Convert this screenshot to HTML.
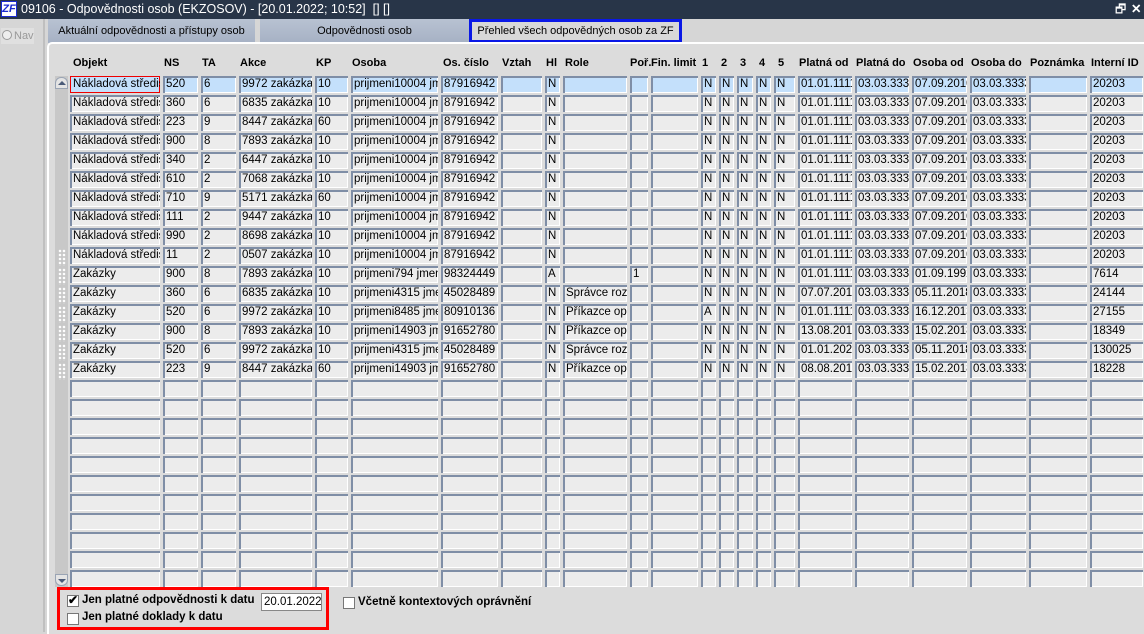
<!DOCTYPE html>
<html><head><meta charset="utf-8"><style>
*{margin:0;padding:0;box-sizing:border-box}
body{width:1144px;height:632px;overflow:hidden;background:#d6d6d6;font-family:"Liberation Sans",Arial,sans-serif;font-size:12px;color:#000;position:relative}
.abs{position:absolute}
#title{left:0;top:0;width:1144px;height:19px;background:#283548;color:#fff;font-size:12.5px;line-height:19px}
#logo{left:1px;top:1px;width:16px;height:16px;background:#fff;color:#1a2bd0;font-weight:bold;font-style:italic;font-size:11px;line-height:14px;text-align:center;border:1px solid #1a2bd0}
#side{left:0;top:19px;width:45px;height:613px;background:#d6d6d6;border-right:2px solid #bfbfbf}
#tabs{left:47px;top:19px;width:1097px;height:24px;background:#d6d6d6}
.tab{position:absolute;top:19px;height:24px;background:linear-gradient(#b8c2d2,#a6b1c4);font-size:11px;line-height:24px;text-align:center;color:#000;white-space:nowrap;overflow:hidden}
#panel{left:47px;top:42px;width:1100px;height:592px;background:#dcdcdc;border-top:2px solid #fff;border-left:2px solid #fff;border-top-left-radius:5px}
table{position:absolute;left:70px;top:76px;width:1076px;border-collapse:separate;border-spacing:0;table-layout:fixed}
td{height:19px;border-right:3px solid transparent;border-bottom:2px solid transparent;background:#ececec;background-clip:padding-box;box-shadow:inset 2px 2px 0 #7f8ea6,inset -1px -1px 0 #fff;padding:0 0 0 3px;white-space:nowrap;overflow:hidden;font-size:11.5px;line-height:17px}
tr.sel td{background-color:#c4e0fb}
.hd{position:absolute;top:57px;font-weight:bold;font-size:11px}
#scroll{left:55px;top:76px;width:13px;height:511px;background:#c8c8c8}
.btn{position:absolute;left:55px;width:13px;height:12px;background:#e4e4e4;border:1px solid #9aa4b4;border-radius:6px 6px 0 0}
.dots{position:absolute;left:58px;width:8px;height:17px;background:radial-gradient(circle,#fff 1px,transparent 1.5px) 0 0/4px 4px}
.cb{position:absolute;width:12px;height:12px;background:#fff;border:1px solid #777}
.lb{position:absolute;font-weight:bold;font-size:11.5px}
</style></head><body>
<div id="title" class="abs"><div id="logo" class="abs">ZF</div><span class="abs" style="left:21px;top:0">09106 - Odpovědnosti osob (EKZOSOV) - [20.01.2022; 10:52]&nbsp; [] []</span><span class="abs" style="left:1115px;top:0;font-size:12px">🗗</span><span class="abs" style="left:1131px;top:0;font-weight:bold">✕</span></div>
<div id="side" class="abs"><div class="abs" style="left:1px;top:9px;width:33px;height:16px;background:#e0e0e0;color:#999;font-size:11px;line-height:16px;white-space:nowrap"><span style="display:inline-block;width:10px;height:10px;border:1px solid #999;border-radius:50%;vertical-align:-1px;margin:0 2px 0 1px;background:#eee"></span>Nav</div></div>
<div id="tabs" class="abs"></div>
<div class="tab" style="left:48px;width:207px">Aktuální odpovědnosti a přístupy osob</div>
<div class="tab" style="left:260px;width:209px">Odpovědnosti osob</div>
<div class="tab" style="left:469px;width:213px;background:#d8d8d8;border:3px solid #0a18e6;line-height:18px">Přehled všech odpovědných osob za ZF</div>
<div id="panel" class="abs"></div>
<div class="hd" style="left:73px">Objekt</div><div class="hd" style="left:164px">NS</div><div class="hd" style="left:202px">TA</div><div class="hd" style="left:240px">Akce</div><div class="hd" style="left:316px">KP</div><div class="hd" style="left:352px">Osoba</div><div class="hd" style="left:443px">Os. číslo</div><div class="hd" style="left:502px">Vztah</div><div class="hd" style="left:546px">Hl</div><div class="hd" style="left:565px">Role</div><div class="hd" style="left:630px">Poř.</div><div class="hd" style="left:651px">Fin. limit</div><div class="hd" style="left:702px">1</div><div class="hd" style="left:721px">2</div><div class="hd" style="left:740px">3</div><div class="hd" style="left:759px">4</div><div class="hd" style="left:778px">5</div><div class="hd" style="left:799px">Platná od</div><div class="hd" style="left:856px">Platná do</div><div class="hd" style="left:913px">Osoba od</div><div class="hd" style="left:971px">Osoba do</div><div class="hd" style="left:1030px">Poznámka</div><div class="hd" style="left:1091px">Interní ID</div>
<div id="scroll" class="abs"></div>
<div class="btn" style="top:77px"><div style="margin:3px auto 0;width:0;height:0;border:4px solid transparent;border-bottom:4px solid #4a5a78;border-top:0"></div></div>
<div class="btn" style="top:574px;border-radius:0 0 6px 6px"><div style="margin:4px auto 0;width:0;height:0;border:4px solid transparent;border-top:4px solid #4a5a78;border-bottom:0"></div></div>
<div class="dots" style="top:249px"></div><div class="dots" style="top:268px"></div><div class="dots" style="top:287px"></div><div class="dots" style="top:306px"></div><div class="dots" style="top:325px"></div><div class="dots" style="top:344px"></div><div class="dots" style="top:363px"></div>
<table>
<colgroup><col style="width:93px"><col style="width:38px"><col style="width:38px"><col style="width:76px"><col style="width:36px"><col style="width:90px"><col style="width:60px"><col style="width:44px"><col style="width:18px"><col style="width:67px"><col style="width:21px"><col style="width:50px"><col style="width:18px"><col style="width:18px"><col style="width:19px"><col style="width:18px"><col style="width:24px"><col style="width:57px"><col style="width:57px"><col style="width:58px"><col style="width:59px"><col style="width:61px"><col style="width:56px"></colgroup>
<tr class="sel"><td style="box-shadow:inset 0 0 0 1px #e00">Nákladová středisko</td><td>520</td><td>6</td><td>9972 zakázka</td><td>10</td><td>prijmeni10004 jmeno</td><td>87916942</td><td></td><td>N</td><td></td><td></td><td></td><td>N</td><td>N</td><td>N</td><td>N</td><td>N</td><td>01.01.1111</td><td>03.03.3333</td><td>07.09.2010</td><td>03.03.3333</td><td></td><td>20203</td></tr>
<tr><td>Nákladová středisko</td><td>360</td><td>6</td><td>6835 zakázka</td><td>10</td><td>prijmeni10004 jmeno</td><td>87916942</td><td></td><td>N</td><td></td><td></td><td></td><td>N</td><td>N</td><td>N</td><td>N</td><td>N</td><td>01.01.1111</td><td>03.03.3333</td><td>07.09.2010</td><td>03.03.3333</td><td></td><td>20203</td></tr>
<tr><td>Nákladová středisko</td><td>223</td><td>9</td><td>8447 zakázka</td><td>60</td><td>prijmeni10004 jmeno</td><td>87916942</td><td></td><td>N</td><td></td><td></td><td></td><td>N</td><td>N</td><td>N</td><td>N</td><td>N</td><td>01.01.1111</td><td>03.03.3333</td><td>07.09.2010</td><td>03.03.3333</td><td></td><td>20203</td></tr>
<tr><td>Nákladová středisko</td><td>900</td><td>8</td><td>7893 zakázka</td><td>10</td><td>prijmeni10004 jmeno</td><td>87916942</td><td></td><td>N</td><td></td><td></td><td></td><td>N</td><td>N</td><td>N</td><td>N</td><td>N</td><td>01.01.1111</td><td>03.03.3333</td><td>07.09.2010</td><td>03.03.3333</td><td></td><td>20203</td></tr>
<tr><td>Nákladová středisko</td><td>340</td><td>2</td><td>6447 zakázka</td><td>10</td><td>prijmeni10004 jmeno</td><td>87916942</td><td></td><td>N</td><td></td><td></td><td></td><td>N</td><td>N</td><td>N</td><td>N</td><td>N</td><td>01.01.1111</td><td>03.03.3333</td><td>07.09.2010</td><td>03.03.3333</td><td></td><td>20203</td></tr>
<tr><td>Nákladová středisko</td><td>610</td><td>2</td><td>7068 zakázka</td><td>10</td><td>prijmeni10004 jmeno</td><td>87916942</td><td></td><td>N</td><td></td><td></td><td></td><td>N</td><td>N</td><td>N</td><td>N</td><td>N</td><td>01.01.1111</td><td>03.03.3333</td><td>07.09.2010</td><td>03.03.3333</td><td></td><td>20203</td></tr>
<tr><td>Nákladová středisko</td><td>710</td><td>9</td><td>5171 zakázka</td><td>60</td><td>prijmeni10004 jmeno</td><td>87916942</td><td></td><td>N</td><td></td><td></td><td></td><td>N</td><td>N</td><td>N</td><td>N</td><td>N</td><td>01.01.1111</td><td>03.03.3333</td><td>07.09.2010</td><td>03.03.3333</td><td></td><td>20203</td></tr>
<tr><td>Nákladová středisko</td><td>111</td><td>2</td><td>9447 zakázka</td><td>10</td><td>prijmeni10004 jmeno</td><td>87916942</td><td></td><td>N</td><td></td><td></td><td></td><td>N</td><td>N</td><td>N</td><td>N</td><td>N</td><td>01.01.1111</td><td>03.03.3333</td><td>07.09.2010</td><td>03.03.3333</td><td></td><td>20203</td></tr>
<tr><td>Nákladová středisko</td><td>990</td><td>2</td><td>8698 zakázka</td><td>10</td><td>prijmeni10004 jmeno</td><td>87916942</td><td></td><td>N</td><td></td><td></td><td></td><td>N</td><td>N</td><td>N</td><td>N</td><td>N</td><td>01.01.1111</td><td>03.03.3333</td><td>07.09.2010</td><td>03.03.3333</td><td></td><td>20203</td></tr>
<tr><td>Nákladová středisko</td><td>11</td><td>2</td><td>0507 zakázka</td><td>10</td><td>prijmeni10004 jmeno</td><td>87916942</td><td></td><td>N</td><td></td><td></td><td></td><td>N</td><td>N</td><td>N</td><td>N</td><td>N</td><td>01.01.1111</td><td>03.03.3333</td><td>07.09.2010</td><td>03.03.3333</td><td></td><td>20203</td></tr>
<tr><td>Zakázky</td><td>900</td><td>8</td><td>7893 zakázka</td><td>10</td><td>prijmeni794 jmeno</td><td>98324449</td><td></td><td>A</td><td></td><td>1</td><td></td><td>N</td><td>N</td><td>N</td><td>N</td><td>N</td><td>01.01.1111</td><td>03.03.3333</td><td>01.09.1992</td><td>03.03.3333</td><td></td><td>7614</td></tr>
<tr><td>Zakázky</td><td>360</td><td>6</td><td>6835 zakázka</td><td>10</td><td>prijmeni4315 jmeno</td><td>45028489</td><td></td><td>N</td><td>Správce rozpočtu</td><td></td><td></td><td>N</td><td>N</td><td>N</td><td>N</td><td>N</td><td>07.07.2019</td><td>03.03.3333</td><td>05.11.2018</td><td>03.03.3333</td><td></td><td>24144</td></tr>
<tr><td>Zakázky</td><td>520</td><td>6</td><td>9972 zakázka</td><td>10</td><td>prijmeni8485 jmeno</td><td>80910136</td><td></td><td>N</td><td>Příkazce operace</td><td></td><td></td><td>A</td><td>N</td><td>N</td><td>N</td><td>N</td><td>01.01.1111</td><td>03.03.3333</td><td>16.12.2013</td><td>03.03.3333</td><td></td><td>27155</td></tr>
<tr><td>Zakázky</td><td>900</td><td>8</td><td>7893 zakázka</td><td>10</td><td>prijmeni14903 jmeno</td><td>91652780</td><td></td><td>N</td><td>Příkazce operace</td><td></td><td></td><td>N</td><td>N</td><td>N</td><td>N</td><td>N</td><td>13.08.2018</td><td>03.03.3333</td><td>15.02.2018</td><td>03.03.3333</td><td></td><td>18349</td></tr>
<tr><td>Zakázky</td><td>520</td><td>6</td><td>9972 zakázka</td><td>10</td><td>prijmeni4315 jmeno</td><td>45028489</td><td></td><td>N</td><td>Správce rozpočtu</td><td></td><td></td><td>N</td><td>N</td><td>N</td><td>N</td><td>N</td><td>01.01.2021</td><td>03.03.3333</td><td>05.11.2018</td><td>03.03.3333</td><td></td><td>130025</td></tr>
<tr><td>Zakázky</td><td>223</td><td>9</td><td>8447 zakázka</td><td>60</td><td>prijmeni14903 jmeno</td><td>91652780</td><td></td><td>N</td><td>Příkazce operace</td><td></td><td></td><td>N</td><td>N</td><td>N</td><td>N</td><td>N</td><td>08.08.2018</td><td>03.03.3333</td><td>15.02.2018</td><td>03.03.3333</td><td></td><td>18228</td></tr>
<tr><td></td><td></td><td></td><td></td><td></td><td></td><td></td><td></td><td></td><td></td><td></td><td></td><td></td><td></td><td></td><td></td><td></td><td></td><td></td><td></td><td></td><td></td><td></td></tr>
<tr><td></td><td></td><td></td><td></td><td></td><td></td><td></td><td></td><td></td><td></td><td></td><td></td><td></td><td></td><td></td><td></td><td></td><td></td><td></td><td></td><td></td><td></td><td></td></tr>
<tr><td></td><td></td><td></td><td></td><td></td><td></td><td></td><td></td><td></td><td></td><td></td><td></td><td></td><td></td><td></td><td></td><td></td><td></td><td></td><td></td><td></td><td></td><td></td></tr>
<tr><td></td><td></td><td></td><td></td><td></td><td></td><td></td><td></td><td></td><td></td><td></td><td></td><td></td><td></td><td></td><td></td><td></td><td></td><td></td><td></td><td></td><td></td><td></td></tr>
<tr><td></td><td></td><td></td><td></td><td></td><td></td><td></td><td></td><td></td><td></td><td></td><td></td><td></td><td></td><td></td><td></td><td></td><td></td><td></td><td></td><td></td><td></td><td></td></tr>
<tr><td></td><td></td><td></td><td></td><td></td><td></td><td></td><td></td><td></td><td></td><td></td><td></td><td></td><td></td><td></td><td></td><td></td><td></td><td></td><td></td><td></td><td></td><td></td></tr>
<tr><td></td><td></td><td></td><td></td><td></td><td></td><td></td><td></td><td></td><td></td><td></td><td></td><td></td><td></td><td></td><td></td><td></td><td></td><td></td><td></td><td></td><td></td><td></td></tr>
<tr><td></td><td></td><td></td><td></td><td></td><td></td><td></td><td></td><td></td><td></td><td></td><td></td><td></td><td></td><td></td><td></td><td></td><td></td><td></td><td></td><td></td><td></td><td></td></tr>
<tr><td></td><td></td><td></td><td></td><td></td><td></td><td></td><td></td><td></td><td></td><td></td><td></td><td></td><td></td><td></td><td></td><td></td><td></td><td></td><td></td><td></td><td></td><td></td></tr>
<tr><td></td><td></td><td></td><td></td><td></td><td></td><td></td><td></td><td></td><td></td><td></td><td></td><td></td><td></td><td></td><td></td><td></td><td></td><td></td><td></td><td></td><td></td><td></td></tr>
<tr><td></td><td></td><td></td><td></td><td></td><td></td><td></td><td></td><td></td><td></td><td></td><td></td><td></td><td></td><td></td><td></td><td></td><td></td><td></td><td></td><td></td><td></td><td></td></tr>
</table>
<div class="abs" style="left:57px;top:587px;width:272px;height:43px;border:3px solid #f00"></div>
<div class="cb" style="left:67px;top:595px"><span style="position:absolute;left:0;top:-3px;font-size:12px;font-weight:bold">✔</span></div>
<div class="lb" style="left:82px;top:594px">Jen platné odpovědnosti k datu</div>
<div class="abs" style="left:261px;top:593px;width:61px;height:18px;background:#fff;border:1px solid #888;font-size:11.5px;line-height:16px;padding-left:2px;white-space:nowrap;overflow:hidden">20.01.2022</div>
<div class="cb" style="left:67px;top:613px"></div>
<div class="lb" style="left:82px;top:611px">Jen platné doklady k datu</div>
<div class="cb" style="left:343px;top:597px"></div>
<div class="lb" style="left:358px;top:596px">Včetně kontextových oprávnění</div>
</body></html>
